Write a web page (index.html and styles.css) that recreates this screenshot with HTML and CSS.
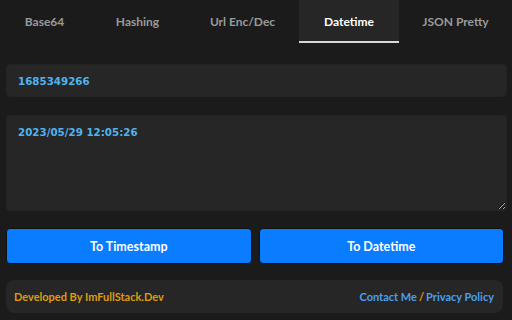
FILE: index.html
```html
<!DOCTYPE html>
<html>
<head>
<meta charset="utf-8">
<link rel="stylesheet" href="styles.css">
</head>
<body>
<nav class="tabs">
  <div class="tab t1">Base64</div>
  <div class="tab t2">Hashing</div>
  <div class="tab t3">Url Enc/Dec</div>
  <div class="tab t4 active">Datetime</div>
  <div class="tab t5">JSON Pretty</div>
</nav>
<main class="content">
  <input class="field" type="text" value="1685349266">
  <textarea class="area">2023/05/29 12:05:26</textarea>
  <div class="actions">
    <button class="btn">To Timestamp</button>
    <button class="btn">To Datetime</button>
  </div>
  <footer class="footer">
    <span class="dev">Developed By ImFullStack.Dev</span>
    <span class="links"><a class="link">Contact Me</a><span class="sep">/</span><a class="link">Privacy Policy</a></span>
  </footer>
</main>
</body>
</html>
```
FILE: styles.css
```css
html, body {
  margin: 0;
  padding: 0;
  background: #1b1b1b;
  font-family: Lato, "Open Sans", sans-serif;
  width: 512px;
  height: 320px;
  overflow: hidden;
}
.tabs {
  display: flex;
  height: 43px;
}
.tab {
  box-sizing: border-box;
  flex-shrink: 0;
  white-space: nowrap;
  height: 43px;
  display: flex;
  align-items: center;
  justify-content: center;
  color: #9a9a9a;
  font-size: 12px;
  font-weight: 700;
}
.t1 { width: 89px; }
.t2 { width: 97px; }
.t3 { width: 113px; }
.t4 { width: 100px; }
.t5 { width: 113px; }
.tab.active {
  background: #262626;
  color: #fff;
  border-bottom: 2px solid #d8d8d8;
  padding-top: 2px;
}
.content {
  padding: 21px 5px 0 6px;
  display: flex;
  flex-direction: column;
}
.field, .area {
  box-sizing: border-box;
  width: 501px;
  background: #262626;
  border: 1px solid #232323;
  border-radius: 4px;
  color: #4fb4ee;
  font-family: "DejaVu Sans", sans-serif;
  font-weight: 700;
  font-size: 10.3px;
  outline: none;
  margin: 0;
}
.field {
  height: 33px;
  padding: 0 11px;
}
.area {
  height: 96px;
  margin-top: 18px;
  padding: 9px 11px;
  resize: vertical;
  line-height: 14px;
}
.actions {
  display: flex;
  gap: 7px;
  margin-top: 17px;
  width: 498px;
}
.btn {
  flex: 1;
  height: 36px;
  background: #0a7cff;
  border: 1px solid #101010;
  border-radius: 4px;
  color: #fff;
  font-family: Lato, sans-serif;
  font-weight: 700;
  font-size: 12.5px;
}
.footer {
  margin-top: 16px;
  width: 497px;
  height: 33px;
  box-sizing: border-box;
  background: #262626;
  border-radius: 8px;
  display: flex;
  align-items: center;
  justify-content: space-between;
  padding: 0 9px 0 8px;
  font-size: 11px;
  font-weight: 700;
}
.dev { color: #dd9c12; }
.link { color: #4a9ff0; }
.sep { color: #dd9c12; margin: 0 2px; }
```
